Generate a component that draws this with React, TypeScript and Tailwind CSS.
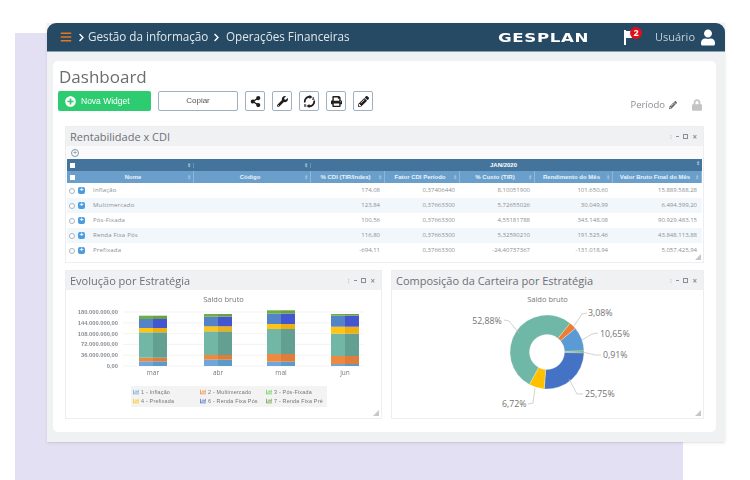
import { ReactNode } from "react";
import {
  FaBars,
  FaChevronRight,
  FaLock,
  FaPencilAlt,
  FaPlusCircle,
  FaPrint,
  FaShareAlt,
  FaUser,
  FaWrench,
  FaChartBar,
} from "react-icons/fa";

const OPEN = "font-['Open_Sans',sans-serif]";

const rows = [
  ["Inflação", "174,08", "0,37406440", "8,10051900", "101.650,60", "15.889.588,28"],
  ["Multimercado", "123,84", "0,37663300", "5,72655026", "30.049,99", "6.494.399,20"],
  ["Pós-Fixada", "100,56", "0,37663300", "4,55181788", "343.148,08", "90.929.483,15"],
  ["Renda Fixa Pós", "116,80", "0,37663300", "5,32590210", "191.525,46", "43.848.113,88"],
  ["Prefixada", "-694,11", "0,37663300", "-24,40737367", "-131.018,94", "5.057.425,94"],
];

const yLabels = ["180.000.000,00", "144.000.000,00", "108.000.000,00", "72.000.000,00", "36.000.000,00", "0,00"];

// left/right tint of each series
const series = [
  ["#70a6d9", "#5b9bc5"],
  ["#ed8a3f", "#e07c3c"],
  ["#72b6a5", "#63a091"],
  ["#ffc414", "#eeb010"],
  ["#5583c8", "#4355cf"],
  ["#70ad47", "#6a9f48"],
];

// y limits of the segments, in chart pixels, from the base upwards
const bars = [
  { label: "mar", x: 73, stops: [69, 64.3, 60.7, 35.3, 31, 22, 18.7] },
  { label: "abr", x: 138, stops: [69, 62.7, 58, 34.3, 29.3, 19.7, 17] },
  { label: "mai", x: 201, stops: [69, 64.7, 57, 32, 27, 16.7, 13.3] },
  { label: "jun", x: 265, stops: [69, 67, 59, 36.7, 29.7, 18.7, 17] },
];

const legend = [
  ["1 - Inflação", "text-[#70a6d9]"],
  ["2 - Multimercado", "text-[#ed8a3f]"],
  ["3 - Pós-Fixada", "text-[#62d34e]"],
  ["4 - Prefixada", "text-[#ffc414]"],
  ["6 - Renda Fixa Pós", "text-[#4a72c0]"],
  ["7 - Renda Fixa Pré", "text-[#6a9f48]"],
];

const slices = [
  { pct: 10.65, color: "#5b9bd5" },
  { pct: 0.91, color: "#70ad47" },
  { pct: 25.75, color: "#4472c4" },
  { pct: 6.72, color: "#ffc000" },
  { pct: 52.88, color: "#6fb7a6" },
  { pct: 3.08, color: "#ed7d31" },
];

const donutLabels = [
  { text: "52,88%", x: 486, y: 325, anchor: "middle", line: "503,321 508,322 518,334" },
  { text: "3,08%", x: 587, y: 317, anchor: "start", line: "586,314 581,315 573,327" },
  { text: "10,65%", x: 599, y: 338, anchor: "start", line: "597,334 591,335 581,341" },
  { text: "0,91%", x: 602, y: 359, anchor: "start", line: "600,356 594,356 582,353" },
  { text: "25,75%", x: 584, y: 398, anchor: "start", line: "582,395 576,395 568,380" },
  { text: "6,72%", x: 501, y: 408, anchor: "start", line: "527,405 532,404 534,389" },
];

function slicePath(start: number, end: number, cx: number, cy: number, r: number, inner: number) {
  const pt = (rad: number, a: number) => {
    const t = ((a - 90) * Math.PI) / 180;
    return `${(cx + rad * Math.cos(t)).toFixed(2)} ${(cy + rad * Math.sin(t)).toFixed(2)}`;
  };
  const large = end - start > 180 ? 1 : 0;
  return `M${pt(r, start)} A${r} ${r} 0 ${large} 1 ${pt(r, end)} L${pt(inner, end)} A${inner} ${inner} 0 ${large} 0 ${pt(inner, start)} Z`;
}

function ResizeMark() {
  return (
    <svg viewBox="0 0 6 6" className="absolute bottom-[2px] right-[2px] w-[6px] h-[6px]">
      <path d="M6 0V6H0Z" fill="#c4c8cc" />
    </svg>
  );
}

function Panel({ title, children, className }: { title: string; children: ReactNode; className: string }) {
  return (
    <div className={`relative bg-white border border-[#eceef0] ${className}`}>
      <div className="h-[19px] bg-[#f0f1f3] flex items-center pl-[4px] pr-[6px]">
        <span className="text-[11px] text-[#6d7075] leading-none">{title}</span>
        <div className="ml-auto flex items-center gap-[4px] text-[#8a8f94]">
          <span className="text-[6px] leading-none">⁝</span>
          <span className="w-[3px] h-px bg-[#8a8f94]" />
          <span className="w-[5px] h-[5px] border border-[#8a8f94]" />
          <span className="text-[8px] leading-none font-bold">×</span>
        </div>
      </div>
      {children}
      <ResizeMark />
    </div>
  );
}

function IconButton({ children }: { children: ReactNode }) {
  return (
    <button className="w-[20px] h-[20px] flex items-center justify-center bg-white border border-[#9fb0c0] rounded-[2px] text-[#1f1f1f] text-[11px]">
      {children}
    </button>
  );
}

function ConvertIcon() {
  return (
    <svg viewBox="0 0 13 13" className="w-[13px] h-[13px]">
      <path d="M1.8 7.5A4.8 4.8 0 0 1 7 1.8" fill="none" stroke="#1f1f1f" strokeWidth="1.8" />
      <path d="M11.2 5.5A4.8 4.8 0 0 1 6 11.2" fill="none" stroke="#1f1f1f" strokeWidth="1.8" />
      <path d="M6.5 0L9.5 2L6.5 4ZM6.5 9L3.5 11L6.5 13Z" fill="#1f1f1f" />
      <text x="9" y="5" fontSize="3.5" fontWeight="bold" fill="#1f1f1f" fontFamily="Liberation Sans">A</text>
      <text x="1" y="11.5" fontSize="3.5" fontWeight="bold" fill="#1f1f1f" fontFamily="Liberation Sans">B</text>
    </svg>
  );
}

function Sort() {
  return <span className="ml-auto text-[5px] leading-none text-[#a9c6dd]">⇕</span>;
}

const colClass = ["w-[117px]", "w-[117px]", "w-[74px]", "w-[75px]", "w-[75px]", "w-[78px]", "w-[89px]"];

function RentTable() {
  const heads = ["Nome", "Código", "% CDI (TIR/Index)", "Fator CDI Período", "% Custo (TIR)", "Rendimento do Mês", "Valor Bruto Final do Mês"];
  return (
    <div className="mx-[1px] text-[6px]">
      <div className="h-[12px] flex bg-[#44749b] text-white font-bold items-center font-['Liberation_Sans',sans-serif]">
        <div className="w-[10px] flex justify-center">
          <span className="w-[5px] h-[5px] bg-white" />
        </div>
        <div className="w-[117px] flex pr-[2px] border-r border-[#6a94b5]"><Sort /></div>
        <div className="w-[117px] flex pr-[2px] border-r border-[#6a94b5]"><Sort /></div>
        <div className="flex-1 flex pr-[2px]">
          <span className="flex-1 text-center">JAN/2020</span>
          <Sort />
        </div>
      </div>
      <div className="h-[12px] flex bg-[#6a9fcb] text-[#e9f2f9] font-bold items-center font-['Liberation_Sans',sans-serif]">
        <div className="w-[10px] flex justify-center">
          <span className="w-[5px] h-[5px] bg-white" />
        </div>
        {heads.map((h, i) => (
          <div key={h} className={`${colClass[i]} h-full flex items-center pl-[2px] pr-[2px] border-r border-[#8db7d8]`}>
            <span className="flex-1 text-center truncate">{h}</span>
            <Sort />
          </div>
        ))}
      </div>
      {rows.map((r, i) => (
        <div key={r[0]} className={`h-[15px] flex items-center text-[#8a8f94] ${i % 2 === 1 ? "bg-[#f2f7fb]" : "bg-white"}`}>
          <div className="w-[10px] flex justify-center">
            <span className="w-[6px] h-[6px] rounded-full border border-[#a8b4bf] bg-white shrink-0" />
          </div>
          <div className="w-[117px] flex items-center pl-[1px]">
            <span className="w-[7px] h-[7px] rounded-[2px] bg-[#4a9be0] text-white text-[7px] leading-[6px] text-center font-bold mr-[8px]">+</span>
            <span className="tracking-[0.2px]">{r[0]}</span>
          </div>
          <div className="w-[117px]" />
          {r.slice(1).map((v, j) => (
            <div key={j} className={`${colClass[j + 2]} text-right pr-[5px]`}>{v}</div>
          ))}
        </div>
      ))}
    </div>
  );
}

function BarChart() {
  return (
    <svg viewBox="0 8 315 79" className="w-[315px] h-[79px] block mt-[1px]">
      {yLabels.map((l, i) => {
        const y = 15 + i * 10.8;
        return (
          <g key={l}>
            <line x1="57" x2="298" y1={y} y2={y} stroke="#f0f0f0" strokeWidth="0.8" />
            <text x="52" y={y + 2} textAnchor="end" fontSize="5.8" fill="#8a8f94" fontFamily="Liberation Sans" fontWeight="bold">{l}</text>
          </g>
        );
      })}
      {bars.map((b) => (
        <g key={b.label}>
          {series.map((c, i) => {
            const top = b.stops[i + 1];
            const h = b.stops[i] - top;
            return (
              <g key={i}>
                <rect x={b.x} y={top} width="14" height={h} fill={c[0]} />
                <rect x={b.x + 14} y={top} width="14" height={h} fill={c[1]} />
              </g>
            );
          })}
          <text x={b.x + 14} y="78" textAnchor="middle" fontSize="6.5" fill="#777" fontFamily="Open Sans">{b.label}</text>
        </g>
      ))}
    </svg>
  );
}

function Donut() {
  let angle = 50;
  return (
    <svg viewBox="391 291 313 128" className="absolute left-0 top-[19px] w-[313px] h-[128px]">
      {slices.map((s) => {
        const start = angle;
        angle += s.pct * 3.6;
        return <path key={s.color} d={slicePath(start, angle, 546, 353, 37, 17.5)} fill={s.color} stroke="#fff" strokeWidth="0.3" />;
      })}
      {donutLabels.map((l) => (
        <g key={l.text}>
          <polyline points={l.line} fill="none" stroke="#bfbfbf" strokeWidth="0.7" />
          <text x={l.x} y={l.y} textAnchor={l.anchor as "start" | "middle"} fontSize="8.8" fill="#737373" fontFamily="Open Sans">{l.text}</text>
        </g>
      ))}
    </svg>
  );
}

export default function App() {
  return (
    <div className={`w-[750px] h-[480px] bg-white overflow-hidden pt-[33px] pl-[15px] ${OPEN}`}>
      <div className="w-[668px] h-[447px] bg-[#e3e0f3] flow-root">
        <div className="w-[678px] h-[419px] ml-[32px] -mt-[10px] bg-[#f0f1f3] shadow-sm blur-[0.45px]">
          {/* HEADER */}
          <div className="h-[29px] bg-[#264a63] rounded-t-[9px] flex items-center pl-[13px] pr-[11px] border-b border-[#8ba0ae] whitespace-nowrap">
            <FaBars className="text-[#e8761a] w-[12px] h-[12px] shrink-0" />
            <FaChevronRight className="text-white w-[7px] h-[9px] ml-[6px] shrink-0" />
            <span className="text-[11.7px] text-[#dfe6ea] ml-[3px] w-[120px] shrink-0">Gestão da informação</span>
            <FaChevronRight className="text-white w-[7px] h-[9px] ml-[5px] shrink-0" />
            <span className="text-[11.7px] text-[#dfe6ea] ml-[6px] w-[124px] shrink-0">Operações Financeiras</span>
            <span className="ml-[148px] text-[13px] font-bold text-white font-['DejaVu_Sans',sans-serif] tracking-[0.5px] leading-none w-[92px] shrink-0 scale-x-[1.28] origin-left">GESPLAN</span>
            <div className="relative ml-[34px] w-[12px] h-[16px] flex items-center shrink-0">
              <svg viewBox="0 0 12 15" className="w-[12px] h-[15px]">
                <path d="M0 0H2V15H0ZM2 1H12L9 4.5L12 8H2Z" fill="#fff" />
              </svg>
              <span className="absolute -top-[2px] left-[6px] w-[12px] h-[12px] rounded-full bg-[#e0101a] text-white text-[9px] font-bold leading-[12px] text-center">2</span>
            </div>
            <span className="ml-[19px] text-[11px] text-[#c5d0d8] shrink-0">Usuário</span>
            <FaUser className="text-white w-[14px] h-[17px] ml-[6px] shrink-0" />
          </div>

          {/* CONTENT CARD */}
          <div className="w-[663px] h-[371px] ml-[6px] mt-[9px] bg-white rounded-[5px] px-[5px] pt-[4px]">
            <h1 className="text-[17px] leading-[23px] text-[#6a6d70] ml-[1px]">Dashboard</h1>

            <div className="flex items-center mt-[3px] h-[20px]">
              <button className="w-[93px] h-[20px] bg-[#2ecc71] rounded-[2px] flex items-center pl-[7px] text-white text-[8.5px] font-['Liberation_Sans',sans-serif]">
                <FaPlusCircle className="w-[11px] h-[11px] mr-[5px]" />
                Nova Widget
              </button>
              <button className="w-[80px] h-[20px] ml-[7px] bg-white border border-[#9fb0c0] rounded-[2px] text-[8px] text-[#555] font-['Liberation_Sans',sans-serif]">
                Copiar
              </button>
              <div className="flex gap-[7px] ml-[7px]">
                <IconButton><FaShareAlt /></IconButton>
                <IconButton><FaWrench /></IconButton>
                <IconButton><ConvertIcon /></IconButton>
                <IconButton><FaPrint /></IconButton>
                <IconButton><FaPencilAlt /></IconButton>
              </div>
              <div className="ml-auto flex items-center pr-[9px] mt-[8px] text-[#8a8f94]">
                <span className="text-[9.5px]">Período</span>
                <FaPencilAlt className="w-[8px] h-[8px] ml-[4px] text-[#666]" />
                <FaLock className="w-[10px] h-[12px] ml-[15px] text-[#c4c4c4]" />
              </div>
            </div>

            {/* RENTABILIDADE */}
            <Panel title="Rentabilidade x CDI" className="mx-[7px] mt-[15px] h-[137px]">
              <div className="h-[13px] bg-[#fafafa] flex items-center pl-[5px]">
                <span className="w-[8px] h-[8px] rounded-full border border-[#7f9bb3] text-[#5f7f99] text-[7px] leading-[6px] text-center">+</span>
              </div>
              <RentTable />
            </Panel>

            {/* CHARTS */}
            <div className="flex justify-between mx-[7px] mt-[7px]">
              <Panel title="Evolução por Estratégia" className="w-[317px] h-[149px]">
                <p className="text-center text-[7.5px] text-[#777] leading-[10px] mt-[4px]">Saldo bruto</p>
                <BarChart />
                <div className="w-[196px] h-[21px] ml-[65px] mt-[2px] bg-[#f3f3f3] grid grid-cols-[67px_66px_61px] pl-[2px] content-center gap-y-[1px] font-['Liberation_Sans',sans-serif] text-[5.4px] tracking-[0.2px] text-[#777] leading-[8px] whitespace-nowrap">
                  {legend.map(([t, c]) => (
                    <div key={t} className="flex items-center gap-[2px]">
                      <FaChartBar className={`${c} w-[6px] h-[6px] shrink-0`} />
                      <span>{t}</span>
                    </div>
                  ))}
                </div>
              </Panel>

              <Panel title="Composição da Carteira por Estratégia" className="w-[313px] h-[149px]">
                <p className="text-center text-[7.5px] text-[#777] leading-[10px] mt-[4px]">Saldo bruto</p>
                <Donut />
              </Panel>
            </div>
          </div>
        </div>
      </div>
    </div>
  );
}
